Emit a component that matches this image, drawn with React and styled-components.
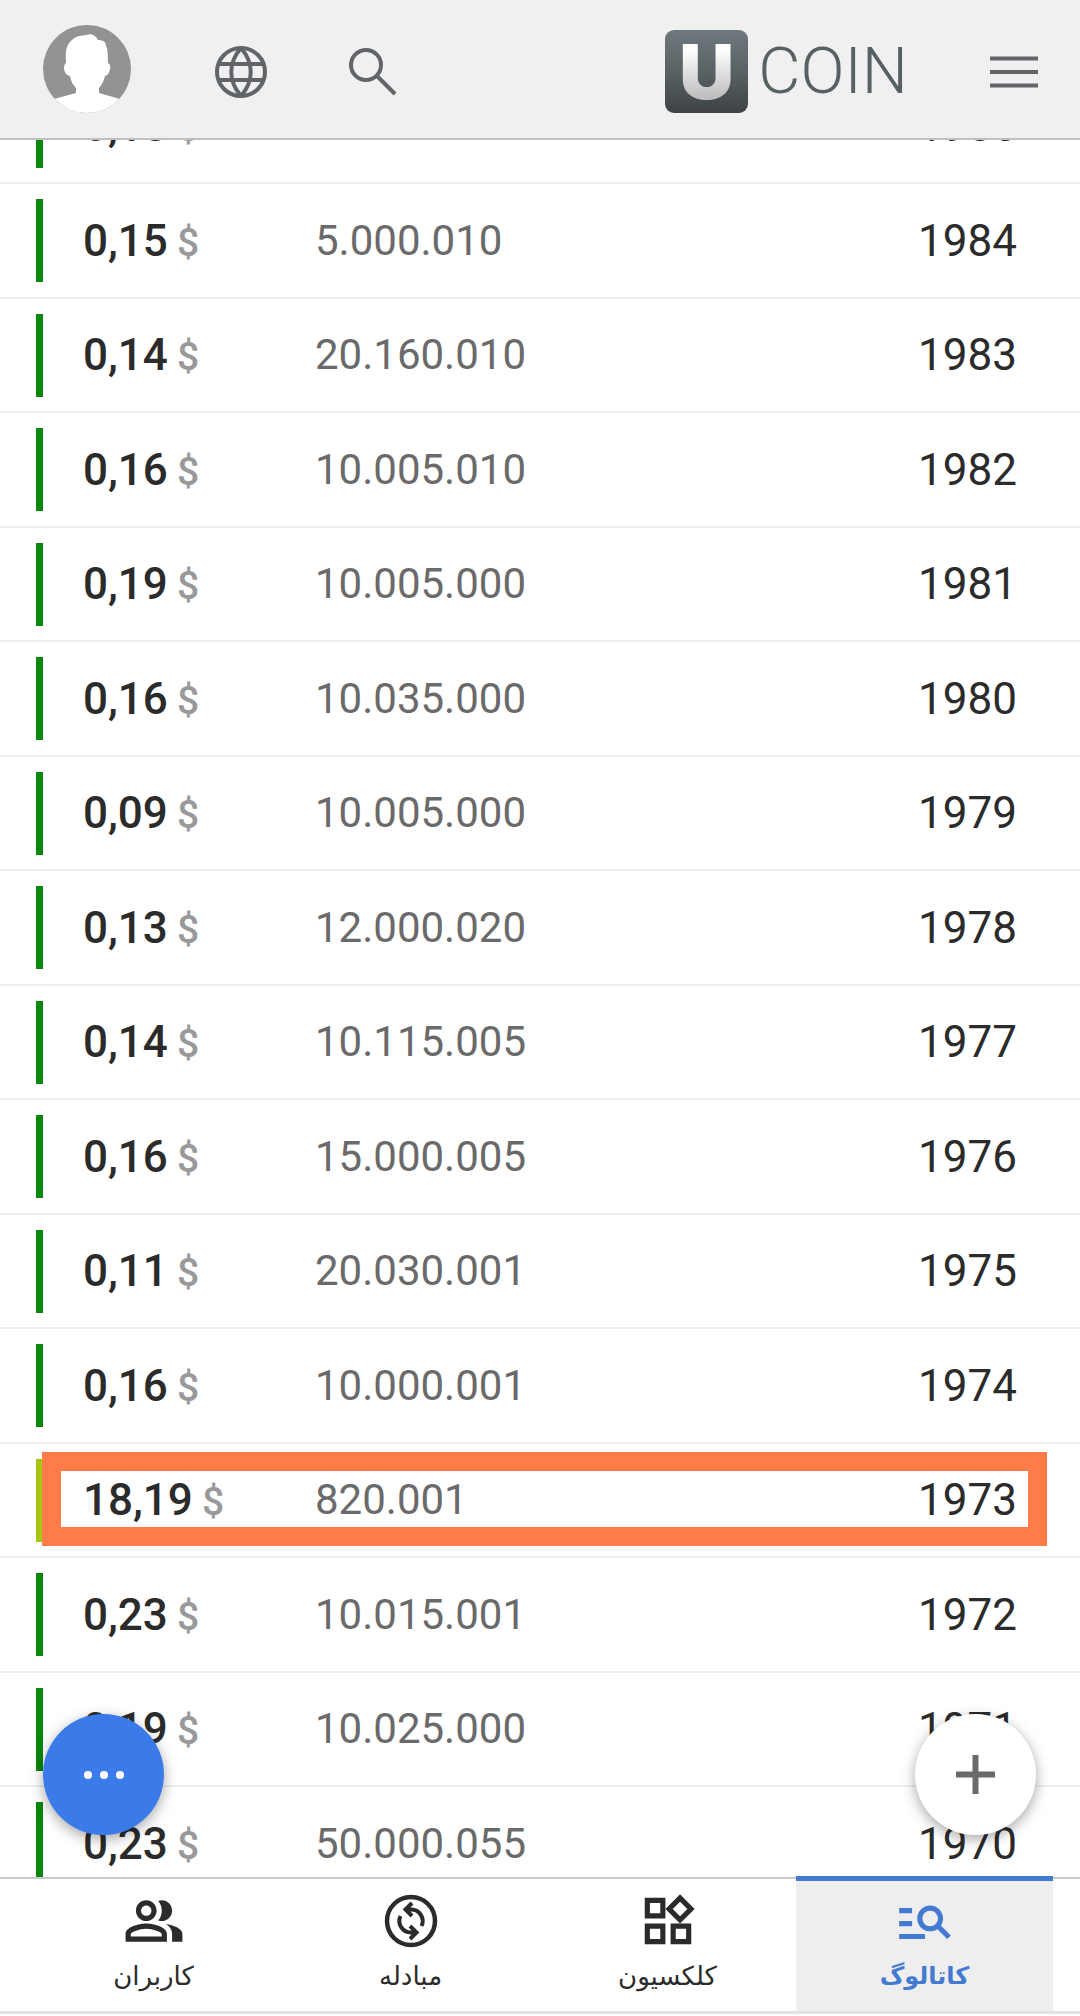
import React, { useLayoutEffect, useRef } from "react";
import styled, { createGlobalStyle } from "styled-components";
import {
  MdManageSearch,
  MdOutlinePeopleAlt,
  MdOutlineWidgets,
} from "react-icons/md";

const GlobalStyle = createGlobalStyle`
  *, *::before, *::after { box-sizing: border-box; }
  body {
    margin: 0;
    background: #fff;
    color: #2b2b2b;
    font-family: Roboto, "DejaVu Sans", sans-serif;
  }
  button { font: inherit; border: 0; padding: 0; background: none; cursor: pointer; }
`;

const Screen = styled.div`
  display: flex;
  flex-direction: column;
  height: 100vh;
  overflow: hidden;
`;

const Header = styled.header`
  flex: none;
  display: flex;
  align-items: center;
  height: 140px;
  padding: 0 42px 0 43px;
  background: #f0f0f0;
  border-bottom: 2px solid #c0c0c0;
`;

const IconButton = styled.button`
  display: flex;
  margin-left: ${(p) => p.$gap || 0}px;
  padding-top: ${(p) => (p.$low ? 6 : 0)}px;
  color: #616468;
`;

const LogoLink = styled.a`
  display: flex;
  align-items: center;
  gap: 10px;
  margin-left: auto;
  padding-top: 4px;
  color: #596063;
  text-decoration: none;
`;

const LogoBadge = styled.span`
  display: flex;
  align-items: center;
  justify-content: center;
  width: 83px;
  height: 83px;
  border-radius: 9px;
  background: linear-gradient(#6f787d, #596264 50%, #3e4244);
`;

const LogoLetter = styled.span`
  background: linear-gradient(#ffffff 25%, #bfbfc1 80%);
  background-clip: text;
  color: transparent;
  font: 900 76px/84px Inter, sans-serif;
`;

const LogoName = styled.span`
  font-size: 65px;
  font-weight: 300;
  line-height: 80px;
`;

const Scroller = styled.main`
  flex: 1;
  min-height: 0;
  overflow-y: auto;
  scrollbar-width: none;
`;

const Table = styled.table`
  width: 100%;
  border-spacing: 0;
  table-layout: fixed;
`;

const Row = styled.tr`
  position: relative;
  height: 115px;
  &:nth-child(odd) { height: 114px; }
`;

const Cell = styled.td`
  padding: 0;
  border-bottom: 2px solid #eee;
  line-height: 52px;
  vertical-align: middle;
`;

const MarkCell = styled(Cell)`
  width: 83px;
  padding-left: 36px;
`;

const Mark = styled.div`
  width: 7px;
  height: 83px;
  background: ${(p) => p.$color};
`;

const PriceCell = styled(Cell)`
  width: 232px;
  padding-top: 2px;
  font-size: 44px;
  font-weight: 500;
`;

const Currency = styled.span`
  margin-left: 9px;
  color: #999;
  font-size: 39px;
`;

const MintageCell = styled(Cell)`
  color: #6a6a6a;
  font-size: 42px;
`;

const YearCell = styled(Cell)`
  width: 240px;
  padding-right: 63px;
  font-size: 44px;
  text-align: right;
`;

const Highlight = styled.span`
  position: absolute;
  inset: 8px 33px 12px 42px;
  border: 19px solid #ff7b47;
  pointer-events: none;
`;

const Fab = styled.button`
  position: fixed;
  bottom: 181px;
  display: flex;
  align-items: center;
  justify-content: center;
  width: 121px;
  height: 121px;
  border-radius: 50%;
  box-shadow: 0 4px 14px rgba(0, 0, 0, 0.35);
`;

const MoreFab = styled(Fab)`
  left: 43px;
  background: #3b7be9;
  color: #fff;
`;

const AddFab = styled(Fab)`
  right: 44px;
  background: #fff;
  color: #6a6a6a;
`;

const Nav = styled.nav`
  flex: none;
  display: flex;
  height: 137px;
  margin-bottom: 2px;
  padding: 0 27px 0 25px;
  border-top: 2px solid #c8cacc;
  border-bottom: 3px solid #dfe3e6;
`;

const NavLink = styled.a`
  flex: 1;
  display: flex;
  flex-direction: column;
  align-items: center;
  gap: 2px;
  margin-top: -3px;
  padding-top: 9px;
  border-top: 5px solid ${(p) => (p.$active ? "#447bd0" : "transparent")};
  background: ${(p) => (p.$active ? "#eee" : "transparent")};
  background-clip: padding-box;
  color: ${(p) => (p.$active ? "#447bd0" : "#2b2b2b")};
  font-family: "DejaVu Sans", sans-serif;
  font-size: ${(p) => (p.$active ? 24 : 26)}px;
  font-weight: ${(p) => (p.$active ? 700 : 400)};
  line-height: 44px;
  text-decoration: none;
`;

const GREEN = "#0a870c";
const LIME = "#a6c514";

const coins = [
  { price: "0,18", mintage: "", year: "1985" },
  { price: "0,15", mintage: "5.000.010", year: "1984" },
  { price: "0,14", mintage: "20.160.010", year: "1983" },
  { price: "0,16", mintage: "10.005.010", year: "1982" },
  { price: "0,19", mintage: "10.005.000", year: "1981" },
  { price: "0,16", mintage: "10.035.000", year: "1980" },
  { price: "0,09", mintage: "10.005.000", year: "1979" },
  { price: "0,13", mintage: "12.000.020", year: "1978" },
  { price: "0,14", mintage: "10.115.005", year: "1977" },
  { price: "0,16", mintage: "15.000.005", year: "1976" },
  { price: "0,11", mintage: "20.030.001", year: "1975" },
  { price: "0,16", mintage: "10.000.001", year: "1974" },
  { price: "18,19", mintage: "820.001", year: "1973", rare: true },
  { price: "0,23", mintage: "10.015.001", year: "1972" },
  { price: "0,19", mintage: "10.025.000", year: "1971" },
  { price: "0,23", mintage: "50.000.055", year: "1970" },
];

const Avatar = () => (
  <svg width="88" height="88" viewBox="0 0 88 88" aria-hidden="true">
    <defs>
      <clipPath id="avatar-clip"><circle cx="44" cy="44" r="44" /></clipPath>
    </defs>
    <g clipPath="url(#avatar-clip)">
      <rect width="88" height="88" fill="#939393" />
      <path
        fill="#fff"
        d="M23 38C22 25 24 19 29 15C34 10 39 11 43 10C49 8 53 11 55 15C60 15 63 17 63 21Q65 23 65 38Q68 39 67 44Q66 50 62 51Q60 59 56 63V68L77 74L90 90H-2L11 74L33 68V63Q28 58 27 51Q22 50 21 44Q21 39 23 38Z"
      />
    </g>
  </svg>
);

const Globe = () => (
  <svg width="52" height="52" viewBox="0 0 52 52" fill="none" stroke="currentColor" strokeWidth="4" aria-hidden="true">
    <circle cx="26" cy="26" r="24" />
    <path d="M4 18H48M4 34H48M26 2C13 17 13 35 26 50M26 2C39 17 39 35 26 50" />
  </svg>
);

const Search = () => (
  <svg width="48" height="48" viewBox="0 0 48 48" fill="none" stroke="currentColor" strokeWidth="4" aria-hidden="true">
    <circle cx="17" cy="17" r="15" />
    <path d="M27.500 27.500L46 46" />
  </svg>
);

const Menu = () => (
  <svg width="48" height="52" viewBox="0 0 48 52" fill="none" stroke="currentColor" strokeWidth="4" aria-hidden="true">
    <path d="M0 12.500H48M0 26H48M0 39.500H48" />
  </svg>
);

const Dots = () => (
  <svg width="40" height="8" viewBox="0 0 40 8" fill="currentColor" aria-hidden="true">
    <circle cx="4" cy="4" r="4" />
    <circle cx="20" cy="4" r="4" />
    <circle cx="36" cy="4" r="4" />
  </svg>
);

const Plus = () => (
  <svg width="39" height="39" viewBox="0 0 39 39" fill="none" stroke="currentColor" strokeWidth="6" aria-hidden="true">
    <path d="M19.500 0V39M0 19.500H39" />
  </svg>
);

const Swap = ({ size }) => (
  <svg width={size} height={size} viewBox="-5 -5 62 62" fill="none" stroke="currentColor" strokeWidth="4" aria-hidden="true">
    <circle cx="26" cy="26" r="24" strokeWidth="4.500" />
    <path d="M22 14.500H26A11.500 11.500 0 0 1 36.500 31M27 8L20.500 14.500L27 21" />
    <path d="M30 37.500H26A11.500 11.500 0 0 1 15.500 21M25 31L31.500 37.500L25 44" />
  </svg>
);

const tabs = [
  { label: "کاتالوگ", Icon: MdManageSearch, active: true },
  { label: "کلکسیون", Icon: MdOutlineWidgets },
  { label: "مبادله", Icon: Swap },
  { label: "کاربران", Icon: MdOutlinePeopleAlt },
];

function CoinRow({ price, mintage, year, rare }) {
  return (
    <Row>
      <MarkCell><Mark $color={rare ? LIME : GREEN} /></MarkCell>
      <PriceCell>{price}<Currency>$</Currency></PriceCell>
      <MintageCell>{mintage}</MintageCell>
      <YearCell>
        {year}
        {rare && <Highlight />}
      </YearCell>
    </Row>
  );
}

export default function App() {
  const list = useRef(null);

  // Open the list slightly scrolled, with its first row tucked under the header.
  useLayoutEffect(() => {
    list.current.scrollTop = 70;
  }, []);

  return (
    <Screen>
      <GlobalStyle />
      <Header>
        <IconButton aria-label="Profile"><Avatar /></IconButton>
        <IconButton aria-label="Language" $gap={84} $low><Globe /></IconButton>
        <IconButton aria-label="Search" $gap={82} $low><Search /></IconButton>
        <LogoLink href="#home">
          <LogoBadge><LogoLetter>U</LogoLetter></LogoBadge>
          <LogoName>COIN</LogoName>
        </LogoLink>
        <IconButton aria-label="Menu" $gap={82} $low><Menu /></IconButton>
      </Header>
      <Scroller ref={list}>
        <Table>
          <tbody>
            {coins.map((coin) => <CoinRow key={coin.year} {...coin} />)}
          </tbody>
        </Table>
      </Scroller>
      <MoreFab aria-label="More"><Dots /></MoreFab>
      <AddFab aria-label="Add"><Plus /></AddFab>
      <Nav dir="rtl">
        {tabs.map(({ label, Icon, active }) => (
          <NavLink key={label} href="#tab" $active={active}>
            <Icon size={62} aria-hidden="true" />
            {label}
          </NavLink>
        ))}
      </Nav>
    </Screen>
  );
}
